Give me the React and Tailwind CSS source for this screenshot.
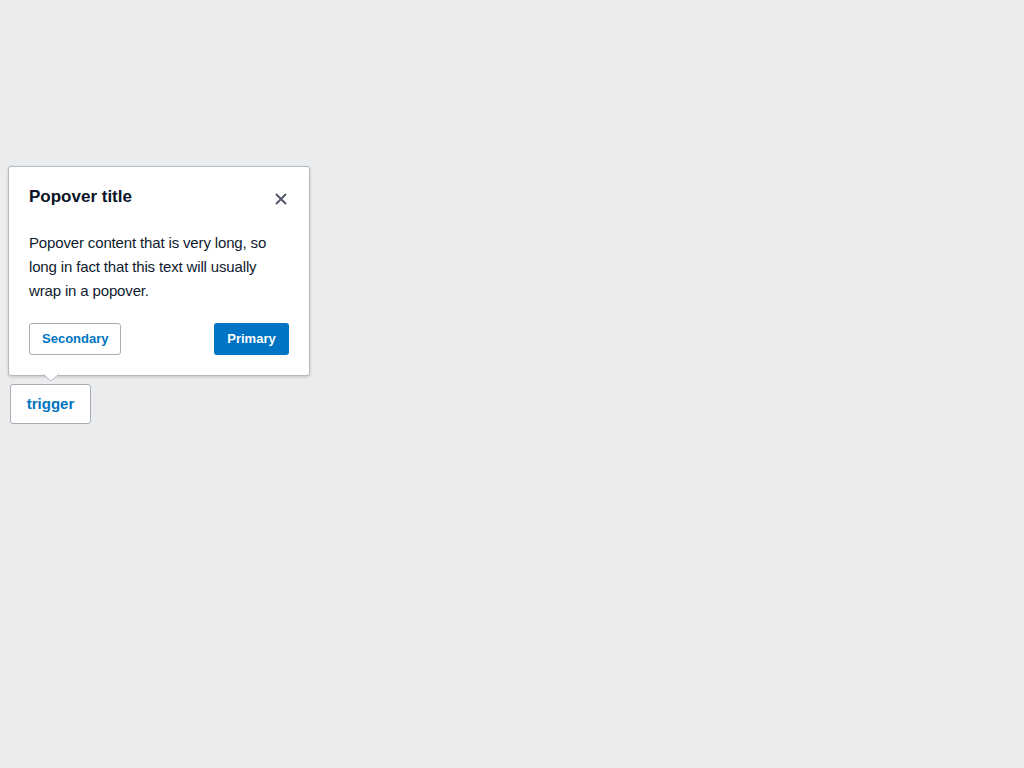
import { useState } from "react";

export default function App() {
  const [open, setOpen] = useState(true);

  return (
    <div className="min-h-screen bg-[#ebecee] pt-[384px] pl-[10px]" style={{ fontFamily: "'Liberation Sans', Arial, sans-serif" }}>
      <div className="relative inline-block">
        {open && (
          <div className="absolute left-[-2px] bottom-[48px] w-[302px] bg-white border border-[#b5b9c0] rounded-[3px] shadow-[0_1px_3px_rgba(0,0,0,0.18)] p-5">
            <div className="flex items-start justify-between">
              <h2 className="text-[17px] leading-5 font-bold text-[#0b1427]">Popover title</h2>
              <button onClick={() => setOpen(false)} className="mt-[6px] mr-[2px] text-[#545b6b]">
                <svg width="12" height="12" viewBox="0 0 12 12" fill="none" stroke="currentColor" strokeWidth="2">
                  <path d="M1 1l10 10M11 1L1 11" />
                </svg>
              </button>
            </div>
            <p className="mt-6 text-[15px] leading-6 tracking-[-0.15px] text-[#0f1a2e]">
              Popover content that is very long, so long in fact that this text will usually wrap in a popover.
            </p>
            <div className="mt-5 flex justify-between">
              <button className="h-8 px-3 border border-[#a9aeb6] rounded-[3px] bg-white text-[13px] font-bold text-[#0074c2]">Secondary</button>
              <button className="h-8 w-[75px] rounded-[3px] bg-[#0074c4] text-[13px] font-bold text-white">Primary</button>
            </div>
            <svg className="absolute left-[34px] bottom-[-7px]" width="16" height="8" viewBox="0 0 16 8">
              <path d="M0 0L8 7L16 0" fill="white" stroke="#b5b9c0" strokeWidth="1" />
              <rect x="0" y="-1" width="16" height="1.5" fill="white" />
            </svg>
          </div>
        )}
        <button onClick={() => setOpen(!open)} className="h-10 w-[81px] bg-white border border-[#a9aeb6] rounded-[3px] text-[15px] font-bold text-[#0074c2]">
          trigger
        </button>
      </div>
    </div>
  );
}
